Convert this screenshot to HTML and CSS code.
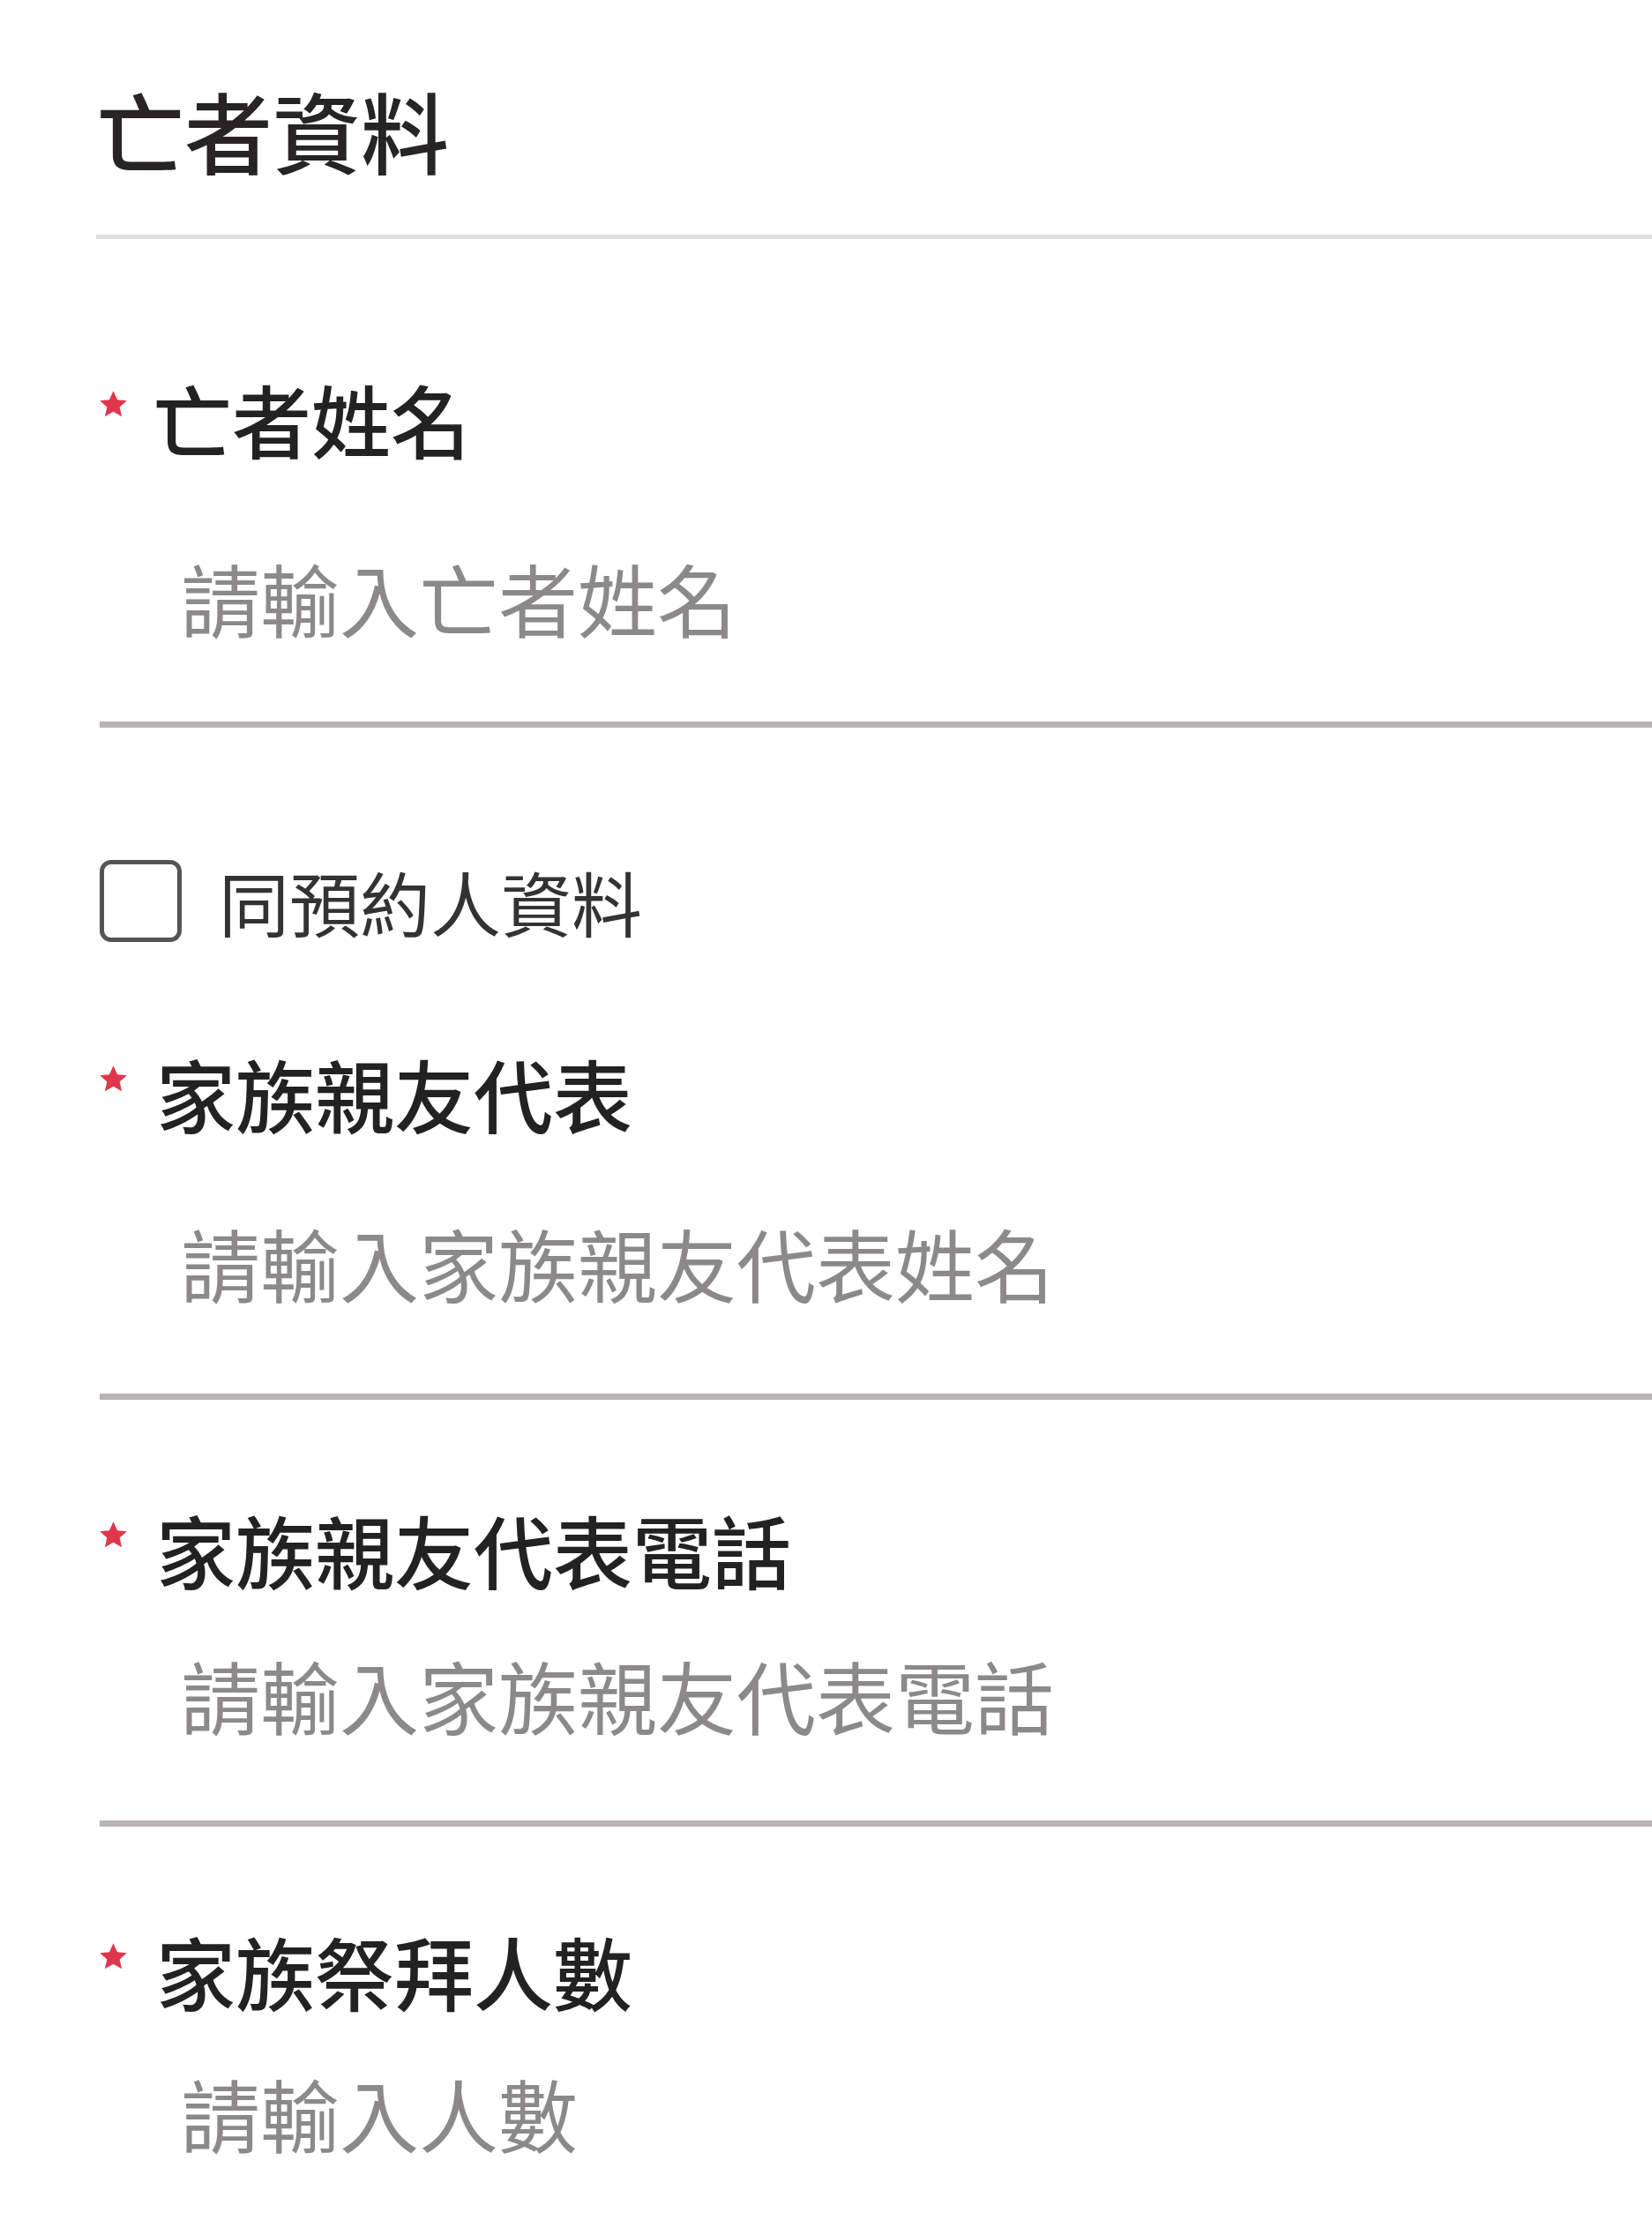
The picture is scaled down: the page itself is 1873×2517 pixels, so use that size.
FILE: index.html
```html
<!DOCTYPE html>
<html lang="zh-Hant">
<head>
<meta charset="utf-8">
<title>亡者資料</title>
<link rel="stylesheet" href="styles.css">
</head>
<body>
<form class="form">
  <h1 class="title">亡者資料</h1>

  <div class="field field--first">
    <label class="label" for="name"><span class="req"><svg viewBox="0 0 24 24" width="37" height="35"><path d="M12 1.5l3.1 6.9 7.4.7-5.6 5 1.7 7.4L12 17.6l-6.6 3.9 1.7-7.4-5.6-5 7.4-.7z" fill="#e0364b"/></svg></span>亡者姓名</label>
    <div class="input-wrap gap-a"><input id="name" class="input" type="text" placeholder="請輸入亡者姓名"></div>
  </div>

  <label class="check-row"><input type="checkbox" class="box"><span class="check-text">同預約人資料</span></label>

  <div class="field field--second">
    <label class="label" for="rep"><span class="req"><svg viewBox="0 0 24 24" width="37" height="35"><path d="M12 1.5l3.1 6.9 7.4.7-5.6 5 1.7 7.4L12 17.6l-6.6 3.9 1.7-7.4-5.6-5 7.4-.7z" fill="#e0364b"/></svg></span>家族親友代表</label>
    <div class="input-wrap gap-b"><input id="rep" class="input" type="text" placeholder="請輸入家族親友代表姓名"></div>
  </div>

  <div class="field field--third">
    <label class="label" for="tel"><span class="req"><svg viewBox="0 0 24 24" width="37" height="35"><path d="M12 1.5l3.1 6.9 7.4.7-5.6 5 1.7 7.4L12 17.6l-6.6 3.9 1.7-7.4-5.6-5 7.4-.7z" fill="#e0364b"/></svg></span>家族親友代表電話</label>
    <div class="input-wrap gap-c"><input id="tel" class="input" type="tel" placeholder="請輸入家族親友代表電話"></div>
  </div>

  <div class="field field--fourth">
    <label class="label" for="num"><span class="req"><svg viewBox="0 0 24 24" width="37" height="35"><path d="M12 1.5l3.1 6.9 7.4.7-5.6 5 1.7 7.4L12 17.6l-6.6 3.9 1.7-7.4-5.6-5 7.4-.7z" fill="#e0364b"/></svg></span>家族祭拜人數</label>
    <div class="input-wrap gap-d"><input id="num" class="input" type="text" placeholder="請輸入人數"></div>
  </div>
</form>
</body>
</html>
```

FILE: styles.css
```css
* { box-sizing: border-box; }

body {
  margin: 0;
  background: #ffffff;
  font-family: "Noto Sans CJK TC", "Noto Sans CJK SC", sans-serif;
  color: #222222;
}

.form {
  padding: 87px 0 0 109px;
}

.title {
  margin: 0;
  font-size: 100px;
  line-height: 120px;
  font-weight: 500;
  color: #262424;
  padding-bottom: 59px;
  border-bottom: 5px solid #e2e0df;
}

.field--first { margin-top: 153px; }
.field--second { margin-top: 121px; }
.field--third { margin-top: 119px; }
.field--fourth { margin-top: 113px; }

.label {
  display: flex;
  align-items: flex-start;
  gap: 26px;
  font-size: 90px;
  line-height: 100px;
  font-weight: 500;
  color: #222222;
}

.field--first .label { gap: 26px; }
.field--second .label,
.field--third .label,
.field--fourth .label { gap: 30px; }

.req {
  display: flex;
  margin-top: 17px;
  margin-left: 1px;
}

.input-wrap {
  margin-left: 4px;
  padding-bottom: 91px;
  border-bottom: 7px solid #b8b3b4;
}

.gap-a { margin-top: 103px; }
.gap-b { margin-top: 92px; padding-bottom: 99px; }
.gap-c { margin-top: 65px; padding-bottom: 93px; }
.gap-d { margin-top: 61px; }

.input {
  display: block;
  width: 100%;
  height: 100px;
  margin: 0;
  padding: 0 0 0 92px;
  border: 0;
  outline: 0;
  background: transparent;
  font-family: inherit;
  font-size: 90px;
  line-height: 100px;
  font-weight: 400;
  color: #222222;
}

.input::placeholder {
  color: #8c898a;
  opacity: 1;
}

.check-row {
  display: flex;
  align-items: center;
  margin-top: 150px;
  margin-left: 4px;
}

.box {
  appearance: none;
  -webkit-appearance: none;
  margin: 0;
  width: 93px;
  height: 93px;
  border: 5px solid #575454;
  border-radius: 13px;
  background: #ffffff;
  flex: none;
}

.check-text {
  margin-left: 42px;
  font-size: 80px;
  line-height: 93px;
  font-weight: 400;
  color: #333333;
}
```
